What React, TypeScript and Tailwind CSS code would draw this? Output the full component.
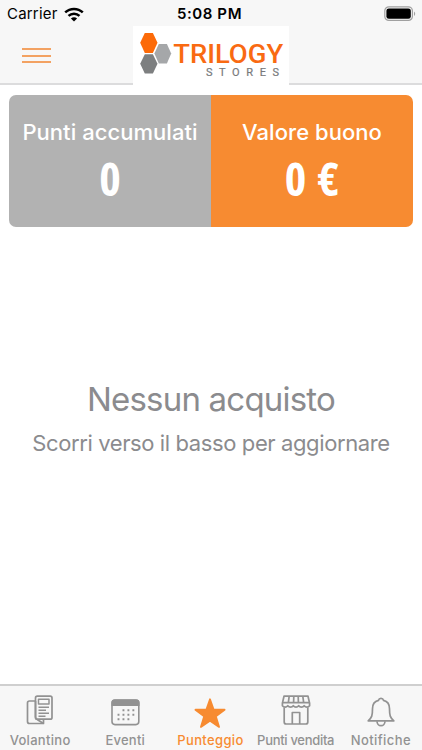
import type { ReactNode } from 'react';
import { clsx } from 'clsx';

function WifiIcon() {
  return (
    <svg width="20" height="15" viewBox="0 0 20 15" fill="none" stroke="#000" strokeWidth="2.5">
      <path d="M1.2 5.4C6.2.7 13.8.7 18.8 5.4" />
      <path d="M4.5 8.9c3.1-2.9 7.9-2.9 11 0" />
      <path d="M10 14.6 6.9 11.5c1.7-1.6 4.5-1.6 6.2 0z" fill="#000" stroke="none" />
    </svg>
  );
}

function BatteryIcon() {
  return (
    <svg width="32" height="16" viewBox="0 0 32 16" fill="none">
      <rect x="0.8" y="0.8" width="27.6" height="13.6" rx="4" stroke="#a0a0a0" strokeWidth="1.2" />
      <rect x="2.4" y="2.4" width="24.4" height="10.4" rx="2.4" fill="#000" />
      <path d="M30 5.4c1.6.9 1.6 3.6 0 4.5z" fill="#a0a0a0" />
    </svg>
  );
}

function Logo() {
  return (
    <svg width="156" height="60" viewBox="0 0 156 60">
      <path d="M11.8 7h8.1l4.6 9.8-4.6 10.2h-8.1L7.2 16.8z" fill="#fc6a08" />
      <path d="M25.8 18h8.1l4.3 9.6-4.3 9.8h-8.1l-4.4-9.8z" fill="#a5a7a9" />
      <path d="M11.8 28.2h8.1l4.6 9.6-4.6 9.8h-8.1l-4.6-9.8z" fill="#7d7f80" />
      <text x="40.2" y="36.8" textLength="110" lengthAdjust="spacingAndGlyphs" fill="#f96a12" className="font-['Roboto',sans-serif] text-[26px] font-medium">
        TRILOGY
      </text>
      <text x="73" y="50" textLength="73" fill="#77797b" stroke="#77797b" strokeWidth="0.2" className="font-['Roboto',sans-serif] text-[11px] font-normal">
        STORES
      </text>
    </svg>
  );
}

function FlyerIcon() {
  return (
    <svg width="28" height="32" viewBox="0 0 28 32" fill="none" stroke="currentColor" strokeWidth="1.7" strokeLinejoin="round">
      <path d="M9.5 6h-6q-2 0-2 2v18.5q0 2 2 2h14v-4" />
      <path d="M9.5 6v16q0 2 2 2.8l6 3.700" />
      <rect x="9.5" y="1.2" width="16.5" height="23" rx="1.8" />
      <rect x="12.5" y="4.2" width="10.5" height="4.8" strokeWidth="1.5" />
      <path d="M12.5 12.2h10.5M12.5 15.2h7.5M12.5 18.2h10.5M12.5 21.2h7" strokeWidth="1.5" />
    </svg>
  );
}

function CalendarIcon() {
  return (
    <svg width="29" height="27" viewBox="0 0 29 27" fill="none">
      <rect x="1" y="1" width="26.8" height="24.6" rx="3" stroke="currentColor" strokeWidth="1.6" />
      <path d="M.5 7V3.5a3 3 0 0 1 3-3h22a3 3 0 0 1 3 3V7z" fill="currentColor" />
      <g stroke="currentColor" strokeWidth="1.9" strokeDasharray="1.9 3.05">
        <path d="M11.5 11.3h12" />
        <path d="M6.55 15.8h17" />
        <path d="M6.55 20.3H19" />
      </g>
    </svg>
  );
}

function StarIcon() {
  return (
    <svg width="32" height="31" viewBox="0 0 32 31" fill="currentColor" stroke="currentColor" strokeWidth="1.8" strokeLinejoin="round">
      <path d="m16 1.3 3.6 10.2 11 .2-8.7 6.7 3.2 10.5L16 22.7l-9.1 6.2 3.2-10.5-8.7-6.7 11-.2z" />
    </svg>
  );
}

function StoreIcon() {
  return (
    <svg width="30" height="31" viewBox="0 0 30 31" fill="none" stroke="currentColor" strokeWidth="1.7" strokeLinejoin="round">
      <path d="M3 1.2h24l1.6 7v2.5a3.4 3.4 0 0 1-5.4 0 3.4 3.4 0 0 1-5.5 0 3.4 3.4 0 0 1-5.4 0 3.4 3.4 0 0 1-5.5 0 3.4 3.4 0 0 1-5.4 0V8.2z" />
      <path d="M1.4 7.7h27.2M8.2 1.2l-.8 6M12.8 1.2l-.2 6M17.2 1.2l.2 6M21.8 1.2l.8 6" />
      <path d="M3.2 12.5V27q0 2 2 2h19.6q2 0 2-2V12.5M11.3 29V17.5h7.4V29" />
    </svg>
  );
}

function BellIcon() {
  return (
    <svg width="28" height="31" viewBox="0 0 28 31" fill="none" stroke="currentColor" strokeWidth="1.7" strokeLinejoin="round">
      <path d="M11.4 3.4a2.7 2.7 0 0 1 5.2 0c4 1 5.9 4.200 5.900 8.300 0 7 .6 8.700 4.300 12.100H1.200c3.700-3.400 4.300-5.100 4.300-12.100 0-4.100 1.900-7.300 5.900-8.300z" />
      <path d="M10 24.200a4 4.500 0 0 0 8 0" />
    </svg>
  );
}

interface Tab {
  label: string;
  icon: ReactNode;
  iconClass: string;
  textClass: string;
  active?: boolean;
}

const tabs: Tab[] = [
  { label: 'Volantino', icon: <FlyerIcon />, iconClass: 'pt-[3px]', textClass: 'tracking-[0.3px]' },
  { label: 'Eventi', icon: <CalendarIcon />, iconClass: 'pt-1.5', textClass: 'tracking-[0.2px]' },
  { label: 'Punteggio', icon: <StarIcon />, iconClass: 'pt-[9px]', textClass: 'tracking-[0.35px]', active: true },
  { label: 'Punti vendita', icon: <StoreIcon />, iconClass: 'pt-[3px]', textClass: 'tracking-[-0.3px]' },
  { label: 'Notifiche', icon: <BellIcon />, iconClass: 'pt-[7px]', textClass: 'tracking-[0.4px]' },
];

function ScoreCard({ title, value, className }: { title: string; value: string; className: string }) {
  return (
    <div className={clsx('flex flex-1 flex-col items-center pt-[23px] text-white', className)}>
      <div className="text-[22px] leading-7 font-medium tracking-[0.05px] whitespace-nowrap">{title}</div>
      <div className="mt-0.5 font-['Open_Sans',sans-serif] text-[46px] leading-[60px] font-bold [font-stretch:75%] [word-spacing:3px]">{value}</div>
    </div>
  );
}

export default function App() {
  return (
    <div className="flex h-[750px] w-[422px] flex-col overflow-hidden bg-white font-['Inter',sans-serif]">
      <header className="h-[85px] border-b-2 border-[#dcdcdd] bg-[#f7f7f7]">
        <div className="grid h-[26px] grid-cols-3 items-center pt-0.5 pr-1.5 pl-[7px] text-[15px] text-black">
          <div className="flex items-center gap-1.5">
            <span className="tracking-[0.2px]">Carrier</span>
            <WifiIcon />
          </div>
          <span className="pr-1 text-center font-semibold tracking-[0.6px] whitespace-nowrap">5:08 PM</span>
          <div className="flex justify-end">
            <BatteryIcon />
          </div>
        </div>
        <div className="flex items-start">
          <div className="flex w-[133px] flex-col gap-[4.5px] pt-[22px] pl-[22px]">
            <span className="h-0.5 w-[29px] bg-[#f3a262]" />
            <span className="h-0.5 w-[29px] bg-[#f3a262]" />
            <span className="h-0.5 w-[29px] bg-[#f3a262]" />
          </div>
          <div className="h-[60px] w-[156px] bg-white">
            <Logo />
          </div>
        </div>
      </header>

      <main className="flex flex-1 flex-col px-[9px] pt-[10px]">
        <div className="flex h-[132px] overflow-hidden rounded-[7px]">
          <ScoreCard title="Punti accumulati" value="0" className="bg-[#b2b2b2]" />
          <ScoreCard title="Valore buono" value="0 €" className="bg-[#f78b31]" />
        </div>
        <div className="mt-[150px] text-center whitespace-nowrap text-[#8b8b8e]">
          <h1 className="text-[33px] leading-[44px] tracking-[-0.8px]">Nessun acquisto</h1>
          <p className="mt-[7px] text-[22px] leading-[30px] tracking-[-0.39px]">Scorri verso il basso per aggiornare</p>
        </div>
      </main>

      <nav className="-mr-0.5 -ml-[2.5px] flex h-[66px] border-t-2 border-[#cfcfcf] bg-[#f7f7f7]">
        {tabs.map(tab => (
          <div
            key={tab.label}
            className={clsx('flex w-[85.2px] flex-none flex-col items-center', tab.active ? 'text-[#f78b31]' : 'text-[#929292]')}
          >
            <div className={clsx('flex h-[46px] items-center', tab.iconClass)}>{tab.icon}</div>
            <span className={clsx('text-[13px] leading-4 font-medium whitespace-nowrap', tab.textClass)}>{tab.label}</span>
          </div>
        ))}
      </nav>
    </div>
  );
}
